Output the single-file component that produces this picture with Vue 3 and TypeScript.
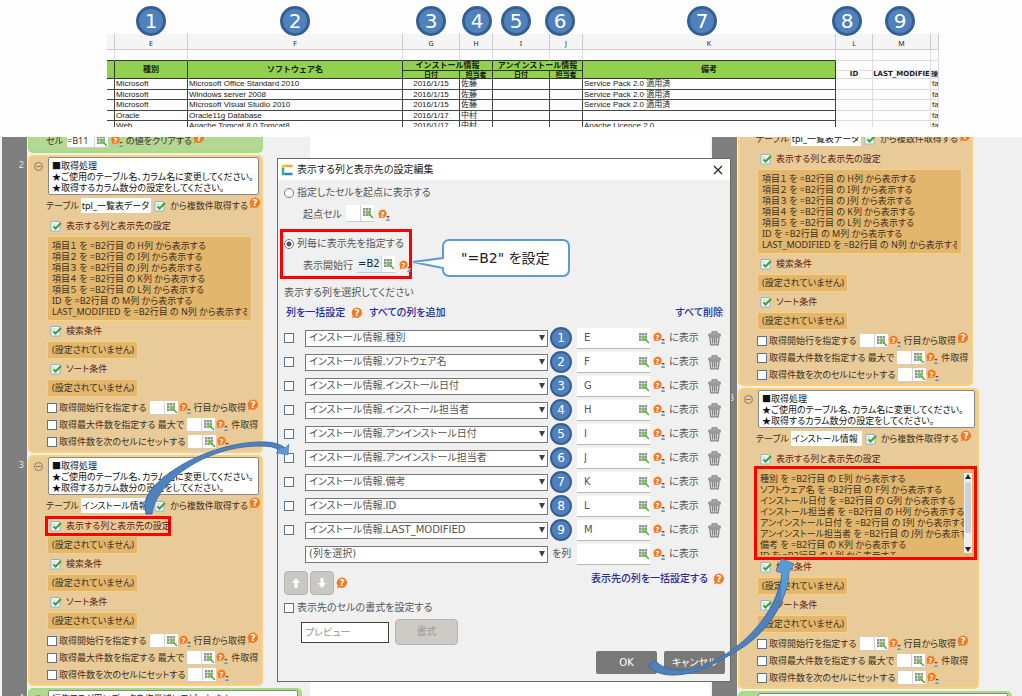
<script setup lang="ts">
interface Step {
  no: string
  table: string
  width: 'normal' | 'wide'
  lines: string[]
  scroll?: boolean
  marked?: 'link' | 'list'
}
interface Flow {
  id: string
  head: boolean
  steps: Step[]
}

const unset = '(設定されていません)'

const itemLines: string[] = [
  '項目１ を =B2行目 の H列 から表示する',
  '項目２ を =B2行目 の I列 から表示する',
  '項目３ を =B2行目 の J列 から表示する',
  '項目４ を =B2行目 の K列 から表示する',
  '項目５ を =B2行目 の L列 から表示する',
  'ID を =B2行目 の M列 から表示する',
  'LAST_MODIFIED を =B2行目 の N列 から表示する',
]
const installLines: string[] = [
  '種別 を =B2行目 の E列 から表示する',
  'ソフトウェア名 を =B2行目 の F列 から表示する',
  'インストール日付 を =B2行目 の G列 から表示する',
  'インストール担当者 を =B2行目 の H列 から表示する',
  'アンインストール日付 を =B2行目 の I列 から表示する',
  'アンインストール担当者 を =B2行目 の J列 から表示する',
  '備考 を =B2行目 の K列 から表示する',
  'ID を =B2行目 の L列 から表示する',
]

const flows: Flow[] = [
  {
    id: 'before',
    head: true,
    steps: [
      { no: '2', table: 'tpl_一覧表データ', width: 'normal', lines: itemLines },
      { no: '3', table: 'インストール情報', width: 'normal', lines: [], marked: 'link' },
    ],
  },
  {
    id: 'after',
    head: false,
    steps: [
      { no: '2', table: 'tpl_一覧表データ', width: 'normal', lines: itemLines },
      { no: '3', table: 'インストール情報', width: 'wide', lines: installLines, scroll: true, marked: 'list' },
    ],
  },
]

const columns: { name: string; cell: string }[] = [
  { name: 'インストール情報.種別', cell: 'E' },
  { name: 'インストール情報.ソフトウェア名', cell: 'F' },
  { name: 'インストール情報.インストール日付', cell: 'G' },
  { name: 'インストール情報.インストール担当者', cell: 'H' },
  { name: 'インストール情報.アンインストール日付', cell: 'I' },
  { name: 'インストール情報.アンインストール担当者', cell: 'J' },
  { name: 'インストール情報.備考', cell: 'K' },
  { name: 'インストール情報.ID', cell: 'L' },
  { name: 'インストール情報.LAST_MODIFIED', cell: 'M' },
]

const badgeCentres: number[] = [151, 295, 431, 477, 516, 560, 702, 847, 900]
const letters: string[] = ['', 'E', 'F', 'G', 'H', 'I', 'J', 'K', 'L', 'M', '']

const software: string[][] = [
  ['Microsoft', 'Microsoft Office Standard 2010', '2016/1/15', '佐藤', 'Service Pack 2.0 適用済'],
  ['Microsoft', 'Windows server 2008', '2016/1/15', '佐藤', 'Service Pack 2.0 適用済'],
  ['Microsoft', 'Microsoft Visual Studio 2010', '2016/1/15', '佐藤', 'Service Pack 2.0 適用済'],
  ['Oracle', 'Oracle11g Database', '2016/1/17', '中村', ''],
  ['Web', 'Apache Tomcat 8.0 Tomcat8', '2016/1/17', '中村', 'Apache Licence 2.0'],
]
</script>

<template>
  <div class="page">
    <svg class="defs" aria-hidden="true">
      <symbol id="i-help" viewBox="0 0 12 12">
        <path d="M6 .5a5.2 5.2 0 1 1-2.6 9.8L1 11.6l.7-2.9A5.2 5.2 0 0 1 6 .5z" fill="#f47a20" />
        <text x="6" y="9" text-anchor="middle" font-family="DejaVu Sans, sans-serif" font-weight="bold" font-size="9" fill="#fff">?</text>
      </symbol>
      <symbol id="i-ask" viewBox="0 0 12 12">
        <path d="M4.500 .5a4.200 4.200 0 1 1-1.800 8L.8 9.600l.4-2.600A4.200 4.200 0 0 1 4.500 .5z" fill="#f47a20" />
        <text x="4.500" y="7.500" text-anchor="middle" font-family="DejaVu Sans, sans-serif" font-weight="bold" font-size="7" fill="#fff">?</text>
        <circle cx="10" cy="8.500" r="1.500" fill="#f6cda2" />
        <path d="M8.400 8.300a1.600 1.600 0 0 1 3.200 0z" fill="#6b3d1c" />
        <path d="M8 12c0-2.500 4-2.500 4 0z" fill="#4da3d8" />
      </symbol>
      <symbol id="i-cell" viewBox="0 0 12 12">
        <path d="M1 1h8v8H1z" fill="#8f9390" />
        <path d="M3.500 1v8M6.500 1v8M1 3.500h8M1 6.500h8" stroke="#dde2dc" stroke-width=".7" />
        <path d="M4 4h4v4H4z" fill="#7cc35c" />
        <path d="M7.500 7.500l3.500 3.500" stroke="#4fae2e" stroke-width="1.400" />
      </symbol>
      <symbol id="i-edit" viewBox="0 0 12 12">
        <path d="M1 1.500h9v9.500H1z" fill="#f3f9fd" stroke="#8fb4cf" />
        <path d="M2.500 4h3M2.500 6h2" stroke="#b4cbdc" />
        <path d="M3.500 6.500l2 2L11 3" fill="none" stroke="#3da535" stroke-width="2.200" />
      </symbol>
      <symbol id="i-trash" viewBox="0 0 14 16">
        <path d="M4.500 3.500V1.500h5v2" fill="none" stroke="#85888a" stroke-width="1.500" />
        <path d="M1 3.500h12l.5 2.500H.5z" fill="#a5a8a8" stroke="#808384" stroke-width=".8" />
        <path d="M2 7h10l-1 8.500H3z" fill="#d9dada" stroke="#808384" stroke-width="1.300" />
        <path d="M5 8v6M7 8v6M9 8v6" stroke="#808384" stroke-width="1.200" />
      </symbol>
    </svg>

    <header class="sheet">
      <table>
        <colgroup>
          <col class="c8" /><col class="c73" /><col class="c215" /><col class="c57" /><col class="c33" />
          <col class="c57" /><col class="c33" /><col /><col class="c37" /><col class="c58" /><col class="c8" />
        </colgroup>
        <thead>
          <tr class="letters"><th v-for="(l, i) in letters" :key="i">{{ l }}</th></tr>
          <tr class="blank"><td v-for="(l, i) in letters" :key="i" :class="{ line: i < 8 }"></td></tr>
          <tr class="top">
            <th class="green" rowspan="2"></th>
            <th class="green" rowspan="2">種別</th>
            <th class="green" rowspan="2">ソフトウェア名</th>
            <th class="green" colspan="2">インストール情報</th>
            <th class="green" colspan="2">アンインストール情報</th>
            <th class="green" rowspan="2">備考</th>
            <td></td><td></td><td></td>
          </tr>
          <tr class="sub">
            <th class="green">日付</th><th class="green">担当者</th>
            <th class="green">日付</th><th class="green">担当者</th>
            <th class="plain">ID</th><th class="plain">LAST_MODIFIE</th><th class="plain">操</th>
          </tr>
        </thead>
        <tbody>
          <tr v-for="(s, i) in software" :key="i">
            <td class="k"></td><td class="k">{{ s[0] }}</td><td class="k">{{ s[1] }}</td>
            <td class="k date">{{ s[2] }}</td><td class="k">{{ s[3] }}</td>
            <td class="k"></td><td class="k"></td><td class="k">{{ s[4] }}</td>
            <td></td><td></td><td>fa</td>
          </tr>
        </tbody>
      </table>
    </header>
    <span v-for="(x, i) in badgeCentres" :key="i" class="badge big" :style="{ left: x + 'px' }">{{ i + 1 }}</span>

    <main class="stage">
      <section v-for="f in flows" :key="f.id" class="flow" :class="f.id">
        <div v-if="f.head" class="step">
          <span class="no"></span>
          <div class="block green-block head-block">
            <div class="table-row">
              <label :for="f.id + '-clear'">セル</label>
              <span class="cell mid"><input :id="f.id + '-clear'" value="=B11" /><svg><use href="#i-cell" /></svg></span>
              <svg class="ask"><use href="#i-ask" /></svg>
              <span>の値をクリアする</span>
              <svg class="help up"><use href="#i-help" /></svg>
            </div>
          </div>
        </div>

        <div v-for="s in f.steps" :key="s.no" class="step">
          <span class="no">{{ s.no }}</span>
          <div class="block" :class="s.width">
            <div class="note-row">
              <button class="fold" aria-label="折りたたむ"></button>
              <div class="note">■取得処理<br />★ご使用のテーブル名、カラム名に変更してください。<br />★取得するカラム数分の設定をしてください。</div>
            </div>
            <div class="table-row">
              <label :for="f.id + s.no">テーブル</label>
              <input :id="f.id + s.no" class="table-name" :value="s.table" />
              <svg class="edit"><use href="#i-edit" /></svg>
              <span>から複数件取得する</span>
              <svg class="help up"><use href="#i-help" /></svg>
            </div>
            <div class="body">
              <a href="#" class="sec" :class="{ marked: s.marked === 'link' }"><svg class="edit"><use href="#i-edit" /></svg>表示する列と表示先の設定</a>
              <div v-if="s.lines.length" class="list" :class="{ scroll: s.scroll }">
                <div class="lines"><p v-for="l in s.lines" :key="l">{{ l }}</p></div>
                <div v-if="s.scroll" class="bar"><i class="au"></i><i class="thumb"></i><i class="ad"></i></div>
              </div>
              <div v-else class="unset">{{ unset }}</div>
              <a href="#" class="sec"><svg class="edit"><use href="#i-edit" /></svg>検索条件</a>
              <div class="unset">{{ unset }}</div>
              <a href="#" class="sec"><svg class="edit"><use href="#i-edit" /></svg>ソート条件</a>
              <div class="unset">{{ unset }}</div>
              <div class="opts">
                <div class="opt">
                  <label><input type="checkbox" />取得開始行を指定する</label>
                  <span class="cell"><input aria-label="開始行" /><svg><use href="#i-cell" /></svg></span>
                  <svg class="ask"><use href="#i-ask" /></svg><span>行目から取得</span>
                  <svg class="help up"><use href="#i-help" /></svg>
                </div>
                <div class="opt">
                  <label><input type="checkbox" />取得最大件数を指定する 最大で</label>
                  <span class="cell"><input aria-label="最大件数" /><svg><use href="#i-cell" /></svg></span>
                  <svg class="ask"><use href="#i-ask" /></svg><span>件取得</span>
                </div>
                <div class="opt">
                  <label><input type="checkbox" />取得件数を次のセルにセットする</label>
                  <span class="cell"><input aria-label="セル" /><svg><use href="#i-cell" /></svg></span>
                  <svg class="ask"><use href="#i-ask" /></svg>
                </div>
              </div>
            </div>
          </div>
        </div>

        <div class="step">
          <span class="no">4</span>
          <div class="block green-block tail-block">
            <div class="note-row">
              <button class="fold" aria-label="折りたたむ"></button>
              <div class="note">編集フラグ用にデータを作業域にコピーします。</div>
            </div>
          </div>
        </div>
      </section>
    </main>

    <section class="dialog" role="dialog" aria-labelledby="dlg-title">
      <div class="title">
        <svg class="logo" viewBox="0 0 12 12" fill="none" stroke-width="2.500">
          <path d="M11.500 2H5" stroke="#f2a33a" /><path d="M6 2H2v3" stroke="#e3c23c" />
          <path d="M2 4v6h3" stroke="#35b38b" /><path d="M4 10h7.500" stroke="#2c86c8" />
        </svg>
        <h1 id="dlg-title">表示する列と表示先の設定編集</h1>
        <button class="close" aria-label="閉じる"><svg viewBox="0 0 10 10"><path d="M1 1l8 8M9 1L1 9" stroke="#222" stroke-width="1.200" /></svg></button>
      </div>
      <div class="content">
        <div class="choice">
          <label class="radio"><input type="radio" name="mode" />指定したセルを起点に表示する</label>
          <div class="start">
            <label for="origin">起点セル</label>
            <span class="cell"><input id="origin" /><svg><use href="#i-cell" /></svg></span>
            <svg class="ask"><use href="#i-ask" /></svg>
          </div>
        </div>
        <div class="choice red">
          <label class="radio"><input type="radio" name="mode" checked />列毎に表示先を指定する</label>
          <div class="start">
            <label for="first">表示開始行</label>
            <span class="cell filled"><input id="first" value="=B2" /><svg><use href="#i-cell" /></svg></span>
            <svg class="ask"><use href="#i-ask" /></svg>
          </div>
        </div>
        <p class="lead">表示する列を選択してください</p>
        <div class="links">
          <a href="#">列を一括設定</a><svg class="help"><use href="#i-help" /></svg><a href="#">すべての列を追加</a>
          <a href="#" class="end">すべて削除</a>
        </div>
        <div v-for="(c, i) in columns" :key="c.cell" class="col-row">
          <input type="checkbox" :aria-label="c.name" />
          <span class="select"><select :aria-label="'列' + (i + 1)"><option>{{ c.name }}</option></select></span>
          <span class="badge">{{ i + 1 }}</span>
          <span class="target"><input :value="c.cell" :aria-label="'表示先' + (i + 1)" /><svg><use href="#i-cell" /></svg></span>
          <svg class="ask"><use href="#i-ask" /></svg>
          <span class="show">に表示</span>
          <button class="trash" aria-label="削除"><svg><use href="#i-trash" /></svg></button>
        </div>
        <div class="col-row">
          <span class="gapbox"></span>
          <span class="select"><select aria-label="列を選択"><option>(列を選択)</option></select></span>
          <span class="unit">を列</span>
          <span class="target"><input aria-label="表示先" /><svg><use href="#i-cell" /></svg></span>
          <svg class="ask"><use href="#i-ask" /></svg>
          <span class="show">に表示</span>
          <span class="trash"></span>
        </div>
        <div class="order">
          <button aria-label="上へ"><svg viewBox="0 0 12 12"><path d="M6 1l4 5H7.500v5h-3V6H2z" fill="#fff" /></svg></button>
          <button aria-label="下へ"><svg viewBox="0 0 12 12"><path d="M6 11l4-5H7.500V1h-3v5H2z" fill="#fff" /></svg></button>
          <svg class="help"><use href="#i-help" /></svg>
          <span class="bulk"><a href="#">表示先の列を一括設定する</a><svg class="help"><use href="#i-help" /></svg></span>
        </div>
        <label class="radio"><input type="checkbox" />表示先のセルの書式を設定する</label>
        <div class="format">
          <input placeholder="プレビュー" aria-label="プレビュー" />
          <button>書式</button>
        </div>
        <div class="actions"><button>OK</button><button>キャンセル</button></div>
      </div>
    </section>

    <svg class="marks" aria-hidden="true">
      <path d="M449 240H563a6 6 0 0 1 6 6V270a6 6 0 0 1-6 6H449a6 6 0 0 1-6-6V268L413 262 443 258V246a6 6 0 0 1 6-6z" fill="#fff" stroke="#5b9bd5" stroke-width="2" />
      <path d="M146 514H152C155 484 204 445 262 446 269 446 275 447 279 450L285 448C279 443 270 442 262 442 206 442 143 482 145 506z" fill="#4f81bd" stroke="#3d6ca5" />
      <path d="M277 447l8 1 4-4-1 11-12-2 4-3z" fill="#5b9bd5" stroke="#3d6ca5" stroke-width=".5" />
      <path d="M648 666L655 660C662 670 680 673 700 667 742 652 778 612 782 573L776 571 782 559 794 564 789 572C787 604 765 636 735 652 708 668 693 675 672 675 661 675 653 671 648 666z" fill="#4f81bd" stroke="#3d6ca5" />
      <path d="M776 571l6-12 12 5-5 8q-1 15-8 29l1-28z" fill="#5b9bd5" />
    </svg>
    <p class="callout">"=B2" を設定</p>
  </div>
</template>

<style>
html,
body {
  background: #fff;
}
</style>

<style scoped>
* {
  box-sizing: border-box;
}
.page {
  position: relative;
  display: flex;
  flex-direction: column;
  height: 100vh;
  overflow: hidden;
  background: #fdfdfd;
  font: 10px/14px 'DejaVu Sans', 'Noto Sans CJK JP', sans-serif;
  font-feature-settings: 'palt';
  color: #555;
}
input,
select,
button {
  font: inherit;
  font-feature-settings: inherit;
  color: inherit;
  margin: 0;
  padding: 0;
  border: 0;
  border-radius: 0;
  background: none;
  min-width: 0;
}
p,
h1 {
  margin: 0;
}
a {
  text-decoration: none;
}
svg {
  display: block;
  flex: none;
}
.defs {
  display: none;
}

/* spreadsheet strip */
.sheet {
  flex: none;
  height: 93px;
  margin: 34px 83px 10px 107px;
  overflow: hidden;
}
table {
  width: 100%;
  table-layout: fixed;
  border-collapse: separate;
  border-spacing: 0;
  font: 8px/9px 'Liberation Sans', 'Noto Sans CJK JP', sans-serif;
  color: #222;
}
.c8 { width: 8px; }
.c33 { width: 33px; }
.c37 { width: 37px; }
.c57 { width: 57px; }
.c58 { width: 58px; }
.c73 { width: 73px; }
.c215 { width: 215px; }
th,
td {
  height: 10px;
  padding: 0 1px;
  overflow: hidden;
  white-space: nowrap;
  border-right: 1px solid #ddd;
  border-bottom: 1px solid #ddd;
}
tbody tr:nth-child(odd) td {
  height: 11px;
  line-height: 10px;
}
.letters th {
  height: 16px;
  padding-top: 4px;
  background: #f5f5f5;
  font: 7px/11px 'Noto Sans', sans-serif;
  border-color: #ccc;
}
.blank td {
  height: 11px;
}
.blank .line {
  border-bottom-color: #333;
}
.sub th {
  height: 8px;
  font-size: 7px;
  line-height: 7px;
}
.green {
  background: #92d050;
  color: #10200a;
  border-color: #333;
}
.sub .plain {
  padding: 0;
  font-family: 'DejaVu Sans', 'Noto Sans CJK JP', sans-serif;
}
.k {
  border-color: #444;
}
.date {
  text-align: center;
}

.badge {
  display: flex;
  flex: none;
  align-items: center;
  justify-content: center;
  width: 22px;
  height: 22px;
  border: 2px solid #365f91;
  border-radius: 50%;
  background: #4f81bd;
  color: #fff;
  font-size: 12px;
}
.badge.big {
  position: absolute;
  top: 6px;
  width: 30px;
  height: 30px;
  transform: translateX(-50%);
  border-width: 3px;
  font-size: 20px;
}

/* procedure panels */
.stage {
  display: flex;
  flex: 1;
  min-height: 0;
  justify-content: space-between;
  overflow: hidden;
  background: #fff;
  font-family: 'Noto Sans', 'Noto Sans CJK JP', sans-serif;
  font-size: 9px;
  color: #3a2f20;
}
.flow {
  width: 312px;
  flex: none;
  background: linear-gradient(90deg, #f4f4f4 2px, #7f7f7f 2px 27px, #f0f0f0 27px);
}
.flow.before {
  width: 310px;
}
.flow.before .step:first-child {
  margin-top: -14px;
}
.flow.after .step:first-child {
  margin-top: -49px;
}
.step {
  display: flex;
  margin-bottom: 2px;
}
.no {
  width: 28px;
  padding: 3px 4px 0 0;
  text-align: right;
  color: #e8e8e8;
}
.block {
  width: 235px;
  padding-bottom: 1px;
  border: 2px solid #ffd078;
  border-radius: 5px;
  background: #e8cb98;
}
.block.wide {
  width: 241px;
}
.green-block {
  border-color: #a5df7c;
  background: #b3d795;
}
.head-block {
  height: 30px;
  padding-top: 7px;
}
.tail-block {
  width: 274px;
  height: 40px;
}
.note-row {
  display: flex;
  align-items: flex-start;
  padding-right: 2px;
}
.fold {
  flex: none;
  width: 9px;
  height: 9px;
  margin: 5px 5px 0 4px;
  border: 1px solid #8a7b5e;
  border-radius: 50%;
}
.fold::after {
  content: '';
  display: block;
  width: 5px;
  height: 1px;
  margin: 0 auto;
  background: #8a7b5e;
}
.note {
  flex: 1;
  height: 38px;
  padding: 2px 3px;
  border: 1px solid #888;
  border-radius: 2px;
  background: #fff;
  color: #111;
  line-height: 11px;
  white-space: nowrap;
}
.table-row {
  display: flex;
  align-items: center;
  height: 21px;
  padding-left: 16px;
  white-space: nowrap;
}
.head-block .table-row {
  height: 18px;
}
.table-name {
  width: 71px;
  height: 15px;
  margin: 0 3px 0 2px;
  padding: 0 1px;
  background: #fff;
  color: #111;
}
.edit {
  width: 12px;
  height: 12px;
  margin-right: 4px;
}
.help {
  width: 12px;
  height: 12px;
}
.help.up {
  margin: 0 0 6px 1px;
}
.ask {
  width: 12px;
  height: 12px;
}
.body {
  padding-left: 17px;
}
.sec {
  display: flex;
  align-items: center;
  width: 126px;
  height: 20px;
  padding-left: 3px;
  white-space: nowrap;
  color: #5a1a12;
}
.sec.marked {
  margin-left: -2px;
  padding-left: 2px;
  border: 3px solid #f00;
}
.list {
  width: 205px;
  padding: 3px 4px;
  border: 1px solid #ffd078;
  background: #e2b66c;
  line-height: 11px;
  white-space: nowrap;
}
.list.scroll {
  display: flex;
  width: 223px;
  height: 94px;
  margin: -3px 0 -3px -3px;
  padding: 4px 2px 2px 3px;
  border: 3px solid #f00;
}
.lines {
  flex: 1;
  min-width: 0;
  overflow: hidden;
}
.bar {
  display: flex;
  flex: none;
  flex-direction: column;
  align-items: center;
  width: 8px;
  height: 80px;
  background: #eceef1;
}
.thumb {
  width: 6px;
  height: 51px;
  margin: 2px 0 auto;
  border-radius: 2px;
  background: #ccd2dc;
}
.au,
.ad {
  border: 3px solid transparent;
  margin: 1px 0;
}
.au {
  border-top: 0;
  border-bottom: 5px solid #222;
}
.ad {
  border-bottom: 0;
  border-top: 5px solid #222;
}
.unset {
  width: 91px;
  height: 18px;
  padding-left: 4px;
  border: 1px solid #ffd078;
  background: #e2b66c;
  line-height: 16px;
  white-space: nowrap;
}
.opts {
  padding-top: 3px;
}
.opt {
  display: flex;
  align-items: center;
  height: 16px;
  margin-bottom: 1px;
  white-space: nowrap;
}
.opt:last-child {
  margin-bottom: 0;
}
.opt label {
  display: flex;
  align-items: center;
  gap: 2px;
  margin-right: 3px;
}
.opt .ask {
  margin: 0 3px 0 1px;
}
input[type='checkbox'] {
  appearance: none;
  flex: none;
  width: 10px;
  height: 10px;
  border: 1px solid #5a7490;
  background: #fff;
}
.cell {
  display: flex;
  flex: none;
  align-items: center;
  width: 28px;
  height: 14px;
  background: #fff;
  border-bottom: 1px solid #ccc;
}
.cell input {
  flex: 1;
  align-self: stretch;
  border-right: 1px solid #d5d5d5;
}
.cell svg {
  width: 12px;
  height: 12px;
  margin-left: 1px;
}
.cell.mid {
  width: 41px;
  margin: 0 3px 0 4px;
}
.mid + .ask {
  margin-right: 3px;
}

/* settings dialog */
.dialog {
  position: absolute;
  left: 277px;
  right: 291px;
  top: 158px;
  border: 1px solid #6a6a60;
  background: #f0f0f0;
}
.title {
  display: flex;
  align-items: center;
  gap: 4px;
  height: 21px;
  padding: 0 7px 0 3px;
  background: #fff;
}
.logo {
  width: 12px;
  height: 12px;
}
h1 {
  flex: 1;
  font-size: 10px;
  font-weight: normal;
  color: #222;
}
.close svg {
  width: 10px;
  height: 10px;
}
.content {
  padding: 4px 5px 7px 6px;
}
.choice {
  height: 45px;
}
.choice.red {
  width: 132px;
  height: 50px;
  margin: 0 0 5px -4px;
  padding: 3px 0 0 1px;
  border: 3px solid #f00;
}
.radio {
  display: flex;
  align-items: center;
  gap: 3px;
  height: 18px;
}
input[type='radio'] {
  appearance: none;
  width: 10px;
  height: 10px;
  border: 1px solid #777;
  border-radius: 50%;
  background: #fff;
}
input[type='radio']:checked {
  background: radial-gradient(#555 0 2px, #fff 3px);
}
.start {
  display: flex;
  align-items: center;
  gap: 4px;
  height: 26px;
  padding-left: 19px;
  white-space: nowrap;
}
.start .cell {
  height: 17px;
  margin-bottom: 4px;
}
.start .cell.filled {
  width: 38px;
  color: #222;
}
.filled input {
  padding-left: 1px;
  background: #e3f1fb;
}
.lead {
  height: 18px;
  line-height: 18px;
}
.links {
  display: flex;
  align-items: center;
  gap: 6px;
  height: 22px;
  margin-bottom: 2px;
  padding: 0 2px;
}
.links a,
.bulk a {
  color: #1f2a9c;
  font-weight: 500;
}
.links .end {
  margin-left: auto;
}
.col-row {
  display: flex;
  align-items: center;
  height: 24px;
}
.gapbox {
  width: 10px;
}
.select {
  position: relative;
  flex: 1;
  min-width: 0;
  height: 17px;
  margin: 0 2px 0 11px;
}
select {
  appearance: none;
  display: block;
  width: 100%;
  height: 100%;
  padding: 0 3px;
  border: 1px solid #777;
  background: #fff;
}
.select::after {
  content: '';
  position: absolute;
  right: 3px;
  top: 5px;
  border: 3px solid transparent;
  border-top: 6px solid #444;
  border-bottom: 0;
  pointer-events: none;
}
.unit {
  width: 22px;
  padding-left: 2px;
  white-space: nowrap;
}
.target {
  display: flex;
  align-items: center;
  width: 73px;
  height: 21px;
  margin: 0 3px 0 5px;
  border-bottom: 1px solid #b5b5b5;
  background: #fff;
}
.target input {
  flex: 1;
  padding-left: 7px;
}
.target svg {
  width: 12px;
  height: 12px;
}
.show {
  width: 43px;
  padding-left: 4px;
}
.trash {
  width: 13px;
  margin-right: 4px;
}
.trash svg {
  width: 13px;
  height: 16px;
}
.order {
  display: flex;
  align-items: center;
  gap: 2px;
  margin: 5px 0 4px;
}
.order button {
  display: flex;
  align-items: center;
  justify-content: center;
  width: 24px;
  height: 24px;
  border: 1px solid #b5b5b0;
  border-radius: 4px;
  background: #c9c8c3;
}
.order button svg {
  width: 12px;
  height: 12px;
}
.bulk {
  display: flex;
  align-items: center;
  gap: 5px;
  margin: 0 0 8px auto;
}
.format {
  display: flex;
  align-items: center;
  gap: 6px;
  margin: 2px 0 6px 17px;
}
.format input {
  width: 88px;
  height: 21px;
  padding: 0 3px;
  border: 1px solid #4a4038;
  background: #fff;
}
.format input::placeholder {
  color: #999;
}
.format button {
  width: 63px;
  height: 26px;
  border: 1px solid #b5b5b0;
  border-radius: 4px;
  background: #cccbc6;
  color: #999;
}
.actions {
  display: flex;
  justify-content: flex-end;
  gap: 7px;
}
.actions button {
  width: 61px;
  height: 23px;
  border-radius: 2px;
  background: #787878;
  color: #fff;
}

/* annotations */
.marks {
  position: absolute;
  inset: 0;
  width: 100%;
  height: 100%;
  pointer-events: none;
}
.callout {
  position: absolute;
  left: 461px;
  top: 248px;
  font-size: 14px;
  line-height: 20px;
  color: #222;
}
</style>
